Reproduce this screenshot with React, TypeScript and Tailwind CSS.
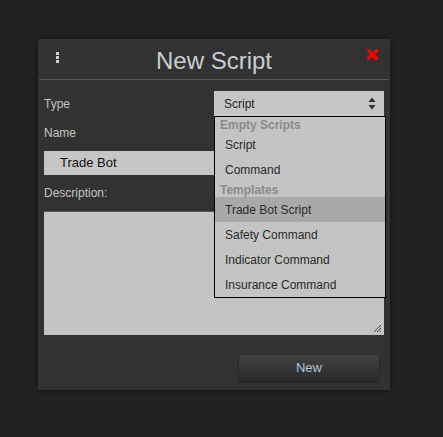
const font = { fontFamily: '"Liberation Sans", Arial, sans-serif' };

function Kebab() {
  return (
    <div className="flex flex-col gap-[1px]">
      <span className="block h-[3px] w-[3px] bg-[#d0d0d0]" />
      <span className="block h-[3px] w-[3px] bg-[#d0d0d0]" />
      <span className="block h-[3px] w-[3px] bg-[#d0d0d0]" />
    </div>
  );
}

function CloseIcon() {
  return (
    <svg width="11" height="11" viewBox="0 0 11 11">
      <path d="M1.5 1.5 L9.5 9.5 M9.5 1.5 L1.5 9.5" stroke="#ff0000" strokeWidth="3.2" strokeLinecap="round" />
    </svg>
  );
}

function SortArrows() {
  return (
    <svg width="8" height="13" viewBox="0 0 8 13">
      <path d="M4 0.5 L7.5 5 L0.5 5 Z" fill="#333333" />
      <path d="M0.5 8 L7.5 8 L4 12.5 Z" fill="#333333" />
    </svg>
  );
}

const groups = [
  { title: "Empty Scripts", items: ["Script", "Command"] },
  { title: "Templates", items: ["Trade Bot Script", "Safety Command", "Indicator Command", "Insurance Command"] },
];

export default function App() {
  return (
    <div
      className="h-[437px] w-[443px] bg-[#222222] pl-[38px] pt-[39px] text-[12px]"
      style={font}
    >
      <div className="relative flex h-[351px] w-[352px] flex-col bg-[#323232] shadow-[0_0_6px_rgba(0,0,0,0.5)]">
        <header className="relative mx-px flex h-[41px] items-center justify-center border-b border-[#555555]">
          <div className="absolute left-[17px] top-[13px]">
            <Kebab />
          </div>
          <h1 className="pt-[4px] text-[24px] leading-none text-[#c9cdd2]">New Script</h1>
          <div className="absolute right-[11px] top-[10px]">
            <CloseIcon />
          </div>
        </header>

        <div className="flex flex-col px-[6px]">
          <div className="mt-[11px] flex h-[25px] items-center justify-between">
            <span className="text-[#c4c4c4]">Type</span>
            <div className="relative">
              <div className="flex h-[25px] w-[170px] items-center justify-between bg-[#c6c6c6] pl-[10px] pr-[8px] text-[#222222]">
                <span>Script</span>
                <SortArrows />
              </div>
              <div className="absolute left-0 top-[25px] z-10 w-[172px] border border-black bg-[#c4c4c4]">
                {groups.map((g) => (
                  <div key={g.title}>
                    <div className="flex h-[15px] items-center pl-[5px] font-bold leading-none text-[#8a8a8a]">
                      {g.title}
                    </div>
                    {g.items.map((item) => (
                      <div
                        key={item}
                        className={`flex h-[25px] items-center pl-[10px] text-[#2a2a2a] ${
                          item === "Trade Bot Script" ? "bg-[#a9a9a9]" : ""
                        }`}
                      >
                        {item}
                      </div>
                    ))}
                  </div>
                ))}
              </div>
            </div>
          </div>

          <div className="mt-[8px] flex h-[17px] items-center text-[#c4c4c4]">Name</div>
          <div className="mt-[10px] flex h-[24px] items-center bg-[#c6c6c6] pl-[16px] text-[13px] text-[#111111]">
            Trade Bot
          </div>
          <div className="mt-[9px] flex h-[17px] items-center text-[#c4c4c4]">Description:</div>
          <div className="relative mt-[10px] h-[124px] border-t border-[#555] bg-[#c4c4c4]">
            <svg className="absolute bottom-[2px] right-[2px]" width="9" height="9" viewBox="0 0 9 9">
              <path d="M1 8 L8 1 M4 8 L8 4 M7 8 L8 7" stroke="#444" strokeWidth="1" />
            </svg>
          </div>
          <div className="mt-[20px] flex justify-end pr-[5px]">
            <button className="flex h-[26px] w-[140px] items-center justify-center rounded-[2px] bg-gradient-to-b from-[#404040] to-[#2c2c2c] text-[13px] text-[#b9c6d6] shadow-[0_1px_2px_rgba(0,0,0,0.6)]">
              New
            </button>
          </div>
        </div>
      </div>
    </div>
  );
}
